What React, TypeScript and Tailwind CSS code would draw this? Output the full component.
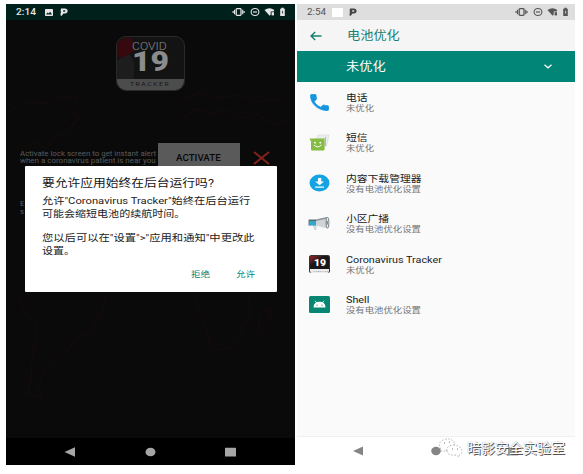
import type { ReactNode } from "react";

const font = "font-['Roboto','Noto_Sans_CJK_SC',sans-serif]";

function Wide({ className = "", children }: { className?: string; children: ReactNode }) {
  return <span className={`block w-max origin-left whitespace-nowrap ${className}`}>{children}</span>;
}

function ParkingGlyph() {
  return (
    <svg className="block" width="8" height="8" viewBox="0 0 8 8" fill="currentColor" fillRule="evenodd">
      <path d="M1 0.6H4.8Q7.6 0.8 7.6 3.1Q7.6 5.4 4.8 5.5H3.4L1.8 7.8H0.6V5.2L1.2 3.4H0.5ZM3.2 2.3V3.8H4.6Q5.4 3.7 5.4 3.05Q5.4 2.3 4.6 2.3Z" />
    </svg>
  );
}

function StatusIcons({ cut }: { cut: string }) {
  return (
    <svg className="block" width="54" height="10" viewBox="0 0 54 10" fill="none" stroke="currentColor">
      <rect x="4.2" y="1.7" width="4.8" height="6.6" rx="0.8" strokeWidth="1.3" />
      <path d="M2.5 2.8V7.2M10.7 2.8V7.2M1.1 4V6M12.1 4V6" strokeWidth="1.1" />
      <ellipse cx="23" cy="5" rx="3.9" ry="3.5" strokeWidth="1.1" />
      <path d="M21 5H25" strokeWidth="1.2" />
      <path d="M32.5 3Q37.5 -0.3 42.3 3L41.6 4.4H38.7V7.6L37.6 8.8Z" fill="currentColor" stroke="none" />
      <path d="M39.6 5.2H42V8.4H39.6Z" fill="currentColor" stroke="none" />
      <path d="M48.2 1.8H49.3V0.8H51.7V1.8H52.8V9H48.2Z" fill="currentColor" stroke="none" />
      <path d="M50.9 3.2L49.8 5.3H50.4V7.2L51.4 4.9H50.9Z" fill={cut} stroke="none" />
    </svg>
  );
}

function WorldMap() {
  return (
    <svg className="absolute inset-0" width="289" height="418" viewBox="0 0 289 418" fill="none" stroke="#160b0b" strokeWidth="1.2">
      <path d="M2 92L20 82L38 84L55 76L72 79L64 92L73 98L62 110L52 114L40 128L28 122L20 132L8 126" />
      <path d="M176 80L194 72L210 78L234 75L248 82L270 80L286 86M178 98L190 88L204 94L220 90L236 98L250 94L268 104L286 100" />
      <path d="M10 272L14 282L20 294L29 300L30 318L26 340L25 360L22 374L36 378L31 368L38 350L46 340L58 334L70 320L86 310L90 298L97 290L99 276" />
      <path d="M189 274L192 290L199 304L203 322L212 330L224 328L235 318L236 306L244 298L243 274" />
      <path d="M263 288L254 296L252 310L258 312L264 300L265 288" />
    </svg>
  );
}

function TrackerLogo() {
  return (
    <div className="mt-[16px] ml-[110px] flex h-[55px] w-[69px] flex-col overflow-hidden rounded-[10px] border border-[#2a2a2a] bg-[#131313]">
      <div className="relative h-[42px] shrink-0">
        <svg className="absolute inset-0" width="67" height="42" viewBox="0 0 67 42">
          <path d="M0 6Q8 -2 15 2L17 13L9 22L0 19Z" fill="#35090d" />
          <path d="M0 23L13 17L17 25V42H0Z" fill="#1d1d1d" />
          <path d="M30 2L34 6L31 8Z" fill="#2b090c" />
        </svg>
        <div className="relative pt-[5px] pl-[15px]">
          <Wide className="text-[10px] leading-[10px] font-light text-[#8a8a8a] scale-x-[1.22]">COVID</Wide>
          <Wide className="-ml-[0.5px] text-[27px] leading-[21px] font-black text-[#8c8c8c] scale-x-[1.18]">19</Wide>
        </div>
      </div>
      <div className="flex flex-1 items-center bg-[#4c4c4c] pl-[13px]">
        <Wide className="text-[5.5px] leading-[7px] tracking-[1.4px] text-[#171717] scale-x-[1.2]">TRACKER</Wide>
      </div>
    </div>
  );
}

function Dialog() {
  return (
    <div className="absolute top-[146px] left-[18.5px] h-[125.5px] w-[252px] rounded-[1px] bg-white pt-[11px] pl-[17.5px] text-[#222]">
      <Wide className="text-[11px] leading-[14px] text-[#171717] scale-x-[1.16]">要允许应用始终在后台运行吗?</Wide>
      <div className="mt-[4px] text-[9.5px] leading-[12.5px]">
        <Wide className="scale-x-[1.183]">允许"Coronavirus Tracker"始终在后台运行</Wide>
        <Wide className="scale-x-[1.16]">可能会缩短电池的续航时间。</Wide>
        <Wide className="mt-[12px] scale-x-[1.19]">您以后可以在"设置"&gt;"应用和通知"中更改此</Wide>
        <Wide className="scale-x-[1.16]">设置。</Wide>
      </div>
      <div className="mt-[11px] flex pl-[149px] text-[8.5px] leading-[12px] text-[#008577]">
        <Wide className="mr-[28px] scale-x-[1.12]">拒绝</Wide>
        <Wide className="scale-x-[1.12]">允许</Wide>
      </div>
    </div>
  );
}

function LeftPhone() {
  return (
    <section className="flex h-[461px] w-[289px] flex-col bg-[#0a0a0a]">
      <div className="flex h-[16px] items-center bg-[#00201c] text-[#e6e6e6]">
        <div className="ml-[10px] w-[28.5px] shrink-0">
          <Wide className="text-[8.5px] font-medium scale-x-[1.2]">2:14</Wide>
        </div>
        <svg width="8" height="7" viewBox="0 0 8 7"><rect width="8" height="7" rx="0.7" fill="currentColor" /><path d="M1 5.4L2.6 3.5L3.6 4.5L5.2 2.7L7 5.4Z" fill="#00201c" /></svg>
        <span className="ml-[7px]"><ParkingGlyph /></span>
        <span className="mr-[9.5px] ml-auto"><StatusIcons cut="#00201c" /></span>
      </div>
      <div className="relative h-[418px] overflow-hidden">
        <WorldMap />
        <div className="relative">
          <TrackerLogo />
          <div className="mt-[52px] flex pl-[14px]">
            <div className="w-[137.5px] pt-[7.5px] text-[6.5px] leading-[7.5px] text-[#5c5c5c]">
              <Wide className="scale-x-[1.21]">Activate lock screen to get instant alert</Wide>
              <Wide className="scale-x-[1.225]">when a coronavirus patient is near you</Wide>
            </div>
            <div className="flex h-[30px] w-[82px] items-start bg-[#5a5a5a] pt-[8.5px] pl-[18.5px] text-[#080808]">
              <Wide className="text-[8.5px] leading-[13px] font-medium scale-x-[1.15]">ACTIVATE</Wide>
            </div>
            <svg className="mt-[8px] ml-[13px]" width="17" height="14" viewBox="0 0 17 14" stroke="#83231d" strokeWidth="2"><path d="M1 1L16 13M16 1L1 13" /></svg>
          </div>
          <div className="mt-[28px] pl-[14px] text-[6.5px] leading-[7.5px] text-[#5c5c5c]">
            <Wide className="scale-x-[1.18]">E</Wide>
            <Wide className="scale-x-[1.18]">s</Wide>
          </div>
        </div>
        <Dialog />
      </div>
      <nav className="flex h-[27px] items-center bg-black pl-[58px]">
        <svg width="180" height="10" viewBox="0 0 180 10" fill="#a6a6a6"><path d="M0.5 5L11 0.3V9.7Z" /><ellipse cx="86.5" cy="5" rx="5" ry="4.3" /><rect x="161" y="0.7" width="11" height="8.8" rx="0.5" /></svg>
      </nav>
    </section>
  );
}

function PhoneIcon() {
  return <svg width="19" height="17" viewBox="2.5 2.5 19 19" preserveAspectRatio="none" fill="#1695df" stroke="#1695df" strokeWidth="0.9"><path d="M6.62 10.79c1.44 2.83 3.76 5.14 6.59 6.59l2.2-2.2c.27-.27.67-.36 1.02-.24 1.12.37 2.33.57 3.57.57.55 0 1 .45 1 1V20c0 .55-.45 1-1 1-9.39 0-17-7.61-17-17 0-.55.45-1 1-1h3.5c.55 0 1 .45 1 1 0 1.25.2 2.45.57 3.57.11.35.03.74-.25 1.02l-2.2 2.2z" /></svg>;
}

function SmsIcon() {
  return (
    <svg width="21" height="18" viewBox="0 0 21 18">
      <path d="M7 5L9 1H20L17.5 12H15V5Z" fill="#eceeee" stroke="#d3d7d7" strokeWidth="0.6" />
      <path d="M0.5 4.5H15.6V15.3Q15.6 16.5 14.4 16.5H3Q2 16.5 2 15.3V7.5Z" fill="#84bd42" />
      <path d="M16.4 3V12" stroke="#a7b3b6" strokeWidth="1" />
      <circle cx="6" cy="8.7" r="0.9" fill="#fff" /><circle cx="11.3" cy="8.7" r="0.9" fill="#fff" />
      <path d="M5 11Q8.6 14.8 12.4 11" fill="none" stroke="#fff" strokeWidth="1" />
    </svg>
  );
}

function DownloadIcon() {
  return <svg width="21" height="18" viewBox="0 0 21 18"><ellipse cx="10.5" cy="9" rx="10" ry="8.5" fill="#16a3e3" /><path d="M9 4H12.3V7.6H15L10.6 11.3L6.2 7.6H9ZM6.2 12.4H15V13.8H6.2Z" fill="#fff" /></svg>;
}

function BroadcastIcon() {
  return (
    <svg width="22" height="17" viewBox="0 0 22 17">
      <path d="M5 9.5H8V14.5H6.8Z" fill="#e2e5e7" stroke="#a5acb0" strokeWidth="0.5" />
      <path d="M1.2 5.2H8V10.6H1.2Z" fill="#35a7c9" />
      <path d="M1.2 4.6H8V5.8H1.2Z" fill="#46535b" />
      <path d="M8 4.6L18.8 2V13.4L8 10.6Z" fill="#cfd4d6" />
      <path d="M8 4.6L18.8 2V3.8L8 6Z" fill="#8f989c" />
      <ellipse cx="19.5" cy="7.7" rx="1.4" ry="5.6" fill="#eef1f2" stroke="#6b757a" strokeWidth="0.9" />
      <ellipse cx="19.2" cy="7.7" rx="0.8" ry="2" fill="#798389" />
      <path d="M1 4.6V10.6" stroke="#4c5960" strokeWidth="0.8" />
    </svg>
  );
}

function TrackerIcon() {
  return (
    <div className="flex h-[18px] w-[21px] flex-col overflow-hidden rounded-[2.5px] border-x border-t border-[#333] bg-[#191919]">
      <div className="flex h-[13px] shrink-0 items-end bg-gradient-to-br from-[#a31b23] via-[#1a1719] via-40% to-[#191919] pb-[1.5px] pl-[4px]">
        <Wide className="text-[9px] leading-[9px] font-black text-white scale-x-[1.15]">19</Wide>
      </div>
      <div className="flex flex-1 items-center bg-[#ededed] pl-[3px]">
        <Wide className="text-[2.5px] leading-[3px] tracking-[0.5px] text-[#888] scale-x-110">TRACKER</Wide>
      </div>
    </div>
  );
}

function ShellIcon() {
  return (
    <svg width="21" height="17" viewBox="0 0 21 17">
      <rect width="21" height="17" rx="1.5" fill="#078672" />
      <path d="M4.5 11.5Q4.5 5.8 10.5 5.8T16.5 11.5Z" fill="#fff" />
      <path d="M7.5 6.8L6.2 4.8M13.5 6.8L14.8 4.8" stroke="#fff" strokeWidth="0.8" />
      <circle cx="8" cy="9.2" r="0.6" fill="#078672" /><circle cx="13" cy="9.2" r="0.6" fill="#078672" />
    </svg>
  );
}

const apps = [
  { name: "电话", state: "未优化", icon: <PhoneIcon /> },
  { name: "短信", state: "未优化", icon: <SmsIcon /> },
  { name: "内容下载管理器", state: "没有电池优化设置", icon: <DownloadIcon /> },
  { name: "小区广播", state: "没有电池优化设置", icon: <BroadcastIcon /> },
  { name: "Coronavirus Tracker", state: "未优化", icon: <TrackerIcon /> },
  { name: "Shell", state: "没有电池优化设置", icon: <ShellIcon /> },
];

function RightPhone() {
  return (
    <section className="relative flex h-[461px] w-[278px] flex-col bg-white">
      <div className="flex h-[16px] items-center bg-[#dedede] text-[#555]">
        <div className="ml-[9.5px] w-[25.5px] shrink-0">
          <Wide className="text-[8.5px] scale-x-[1.16]">2:54</Wide>
        </div>
        <span className="h-[9px] w-[10.5px] bg-white" />
        <span className="ml-[6px] text-[#444]"><ParkingGlyph /></span>
        <span className="mr-[6px] ml-auto"><StatusIcons cut="#dedede" /></span>
      </div>
      <header className="flex h-[31px] items-center bg-[#f5f5f5] pl-[13px] text-[#17806f]">
        <svg width="12" height="10" viewBox="0 0 12 10" fill="none" stroke="currentColor" strokeWidth="1.4"><path d="M11.5 5H1.2M5.2 1L1 5L5.2 9" /></svg>
        <Wide className="ml-[24.5px] text-[12px] leading-[16px] scale-x-[1.1]">电池优化</Wide>
      </header>
      <div className="flex h-[31px] items-center bg-[#008577] pl-[49px] text-white">
        <Wide className="text-[12px] leading-[16px] scale-x-[1.1]">未优化</Wide>
        <svg className="mr-[23px] ml-auto" width="8" height="5" viewBox="0 0 8 5" fill="none" stroke="currentColor" strokeWidth="1.3"><path d="M0.5 0.8L4 3.8L7.5 0.8" /></svg>
      </div>
      <main className="h-[355px] border-b border-[#f0f0f0] bg-[#fafafa]">
        {apps.map((app) => (
          <div key={app.name} className="flex h-[40.5px] items-center">
            <div className="flex w-[44px] justify-center">{app.icon}</div>
            <div className="pt-[1px] pl-[5px]">
              <Wide className="text-[9.5px] leading-[11px] text-[#202020] scale-x-[1.135]">{app.name}</Wide>
              <Wide className="text-[8px] leading-[11px] text-[#747474] scale-x-[1.17]">{app.state}</Wide>
            </div>
          </div>
        ))}
      </main>
      <nav className="flex flex-1 items-center pl-[56px]">
        <svg width="180" height="10" viewBox="0 0 180 10" fill="#858585"><path d="M0 5L10 0.5V9.5Z" /><ellipse cx="83" cy="5" rx="4.8" ry="4.2" /><rect x="155" y="1" width="10.5" height="8.5" fill="#999" /></svg>
      </nav>
      <div className="absolute top-[433px] left-[141px] flex items-center gap-[4px]">
        <svg width="25" height="22" viewBox="0 0 25 22" fill="none" stroke="#999" strokeWidth="0.7" strokeDasharray="1.6 1.6">
          <path d="M3 12Q-1 6 5 3Q12 0 16 5L17 8Q9 9 9 14L3 14Z" />
          <path d="M9 14Q8 9 15 8Q23 8 24 14Q24 17 21 18L21 20L18 18Q10 19 9 14Z" fill="#fff" />
          <path d="M6 6H7M11 5H12M14 12H15M19 12H20" stroke="#444" />
        </svg>
        <span className="text-[14px] leading-[20px] whitespace-nowrap text-white [text-shadow:1px_1px_0_#555,0_0_1px_#888]">暗影安全实验室</span>
      </div>
    </section>
  );
}

export default function App() {
  return (
    <div className={`flex h-[474px] w-[583px] gap-[2px] overflow-hidden bg-white pt-[4px] pl-[6px] ${font}`}>
      <LeftPhone />
      <RightPhone />
    </div>
  );
}
